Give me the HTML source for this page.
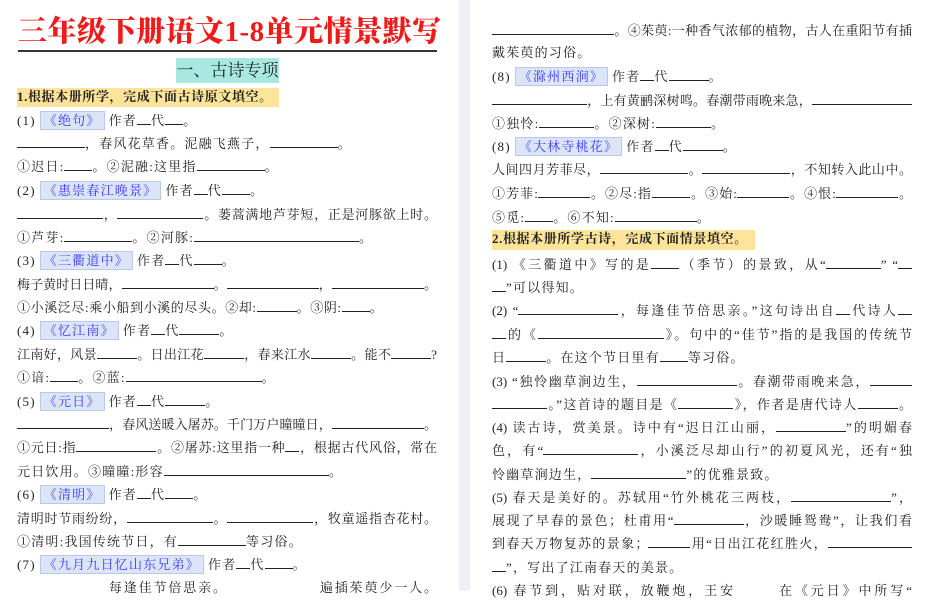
<!DOCTYPE html><html><head><meta charset="utf-8"><style>
body{margin:0;width:933px;height:591px;background:#fff;position:relative;overflow:hidden;font-family:"Liberation Serif","Noto Serif CJK SC","Noto Sans CJK SC",serif;color:#222;}
.l{position:absolute;font-size:13px;letter-spacing:1.2px;white-space:nowrap;line-height:18px;}
.f{width:420px;text-align:justify;text-align-last:justify;letter-spacing:0;}
.b{display:inline-block;border-bottom:1px solid #222;height:13px;vertical-align:baseline;}
.t{background:#dce4f8;border:1px solid #b9c9ee;color:#3a3aff;padding:1px 3px;margin:0 4px;}
</style></head><body>
<div style="position:absolute;left:459px;top:0;width:11px;height:591px;background:#eef0f5"></div>
<div style="position:absolute;left:18px;top:14px;width:419px;font:900 29px 'Liberation Serif','Noto Serif CJK SC',serif;color:#ee1b1b;letter-spacing:0.5px;white-space:nowrap;border-bottom:2px solid #333;line-height:36px">三年级下册语文1-8单元情景默写</div>
<div style="position:absolute;left:176px;top:58px;width:103px;height:25px;background:#a8e8e0;font-size:17px;line-height:25px;text-align:center">一、古诗专项</div>
<div class="l" style="left:17px;top:88px;width:262px;height:19px;background:#fde49a;font-weight:bold;letter-spacing:0.6px">1.根据本册所学，完成下面古诗原文填空。</div>

<div class="l" style="left:17px;top:111px">(1)<span class="t">《绝句》</span>作者<span class="b" style="width:14px"></span>代<span class="b" style="width:18px"></span>。</div>
<div class="l" style="left:17px;top:134px"><span class="b" style="width:68px"></span>，春风花草香。泥融飞燕子，<span class="b" style="width:68px"></span>。</div>
<div class="l" style="left:17px;top:157px">①迟日:<span class="b" style="width:28px"></span>。②泥融:这里指<span class="b" style="width:68px"></span>。</div>
<div class="l" style="left:17px;top:181px">(2)<span class="t">《惠崇春江晚景》</span>作者<span class="b" style="width:14px"></span>代<span class="b" style="width:28px"></span>。</div>
<div class="l f" style="left:17px;top:205px"><span class="b" style="width:86px"></span>，<span class="b" style="width:86px"></span>。蒌蒿满地芦芽短，正是河豚欲上时。</div>
<div class="l" style="left:17px;top:228px">①芦芽:<span class="b" style="width:68px"></span>。②河豚:<span class="b" style="width:165px"></span>。</div>
<div class="l" style="left:17px;top:251px">(3)<span class="t">《三衢道中》</span>作者<span class="b" style="width:14px"></span>代<span class="b" style="width:28px"></span>。</div>
<div class="l f" style="left:17px;top:275px">梅子黄时日日晴，<span class="b" style="width:92px"></span>。<span class="b" style="width:92px"></span>，<span class="b" style="width:92px"></span>。</div>
<div class="l" style="left:17px;top:298px;letter-spacing:0.6px">①小溪泛尽:乘小船到小溪的尽头。②却:<span class="b" style="width:40px"></span>。③阴:<span class="b" style="width:28px"></span>。</div>
<div class="l" style="left:17px;top:321px">(4)<span class="t">《忆江南》</span>作者<span class="b" style="width:14px"></span>代<span class="b" style="width:40px"></span>。</div>
<div class="l f" style="left:17px;top:345px">江南好，风景<span class="b" style="width:40px"></span>。日出江花<span class="b" style="width:40px"></span>，春来江水<span class="b" style="width:40px"></span>。能不<span class="b" style="width:40px"></span>?</div>
<div class="l" style="left:17px;top:368px">①谙:<span class="b" style="width:28px"></span>。②蓝:<span class="b" style="width:136px"></span>。</div>
<div class="l" style="left:17px;top:392px">(5)<span class="t">《元日》</span>作者<span class="b" style="width:14px"></span>代<span class="b" style="width:40px"></span>。</div>
<div class="l f" style="left:17px;top:415px"><span class="b" style="width:92px"></span>，春风送暖入屠苏。千门万户曈曈日，<span class="b" style="width:92px"></span>。</div>
<div class="l f" style="left:17px;top:438px">①元日:指<span class="b" style="width:80px"></span>。②屠苏:这里指一种<span class="b" style="width:14px"></span>，根据古代风俗，常在</div>
<div class="l" style="left:17px;top:462px">元日饮用。③曈曈:形容<span class="b" style="width:165px"></span>。</div>
<div class="l" style="left:17px;top:485px">(6)<span class="t">《清明》</span>作者<span class="b" style="width:14px"></span>代<span class="b" style="width:28px"></span>。</div>
<div class="l f" style="left:17px;top:509px">清明时节雨纷纷，<span class="b" style="width:86px"></span>。<span class="b" style="width:86px"></span>，牧童遥指杏花村。</div>
<div class="l" style="left:17px;top:532px">①清明:我国传统节日，有<span class="b" style="width:68px"></span>等习俗。</div>
<div class="l" style="left:17px;top:555px">(7)<span class="t">《九月九日忆山东兄弟》</span>作者<span class="b" style="width:14px"></span>代<span class="b" style="width:28px"></span>。</div>
<div class="l f" style="left:17px;top:579px"><span class="b" style="width:90px;border:0"></span>每逢佳节倍思亲。<span class="b" style="width:90px;border:0"></span>遍插茱萸少一人。</div>

<div class="l f" style="left:492px;top:21px"><span class="b" style="width:122px"></span>。④茱萸:一种香气浓郁的植物，古人在重阳节有插</div>
<div class="l" style="left:492px;top:44px">戴茱萸的习俗。</div>
<div class="l" style="left:492px;top:67px">(8)<span class="t">《滁州西涧》</span>作者<span class="b" style="width:14px"></span>代<span class="b" style="width:40px"></span>。</div>
<div class="l f" style="left:492px;top:91px"><span class="b" style="width:95px"></span>，上有黄鹂深树鸣。春潮带雨晚来急，<span class="b" style="width:100px"></span></div>
<div class="l" style="left:492px;top:114px">①独怜:<span class="b" style="width:55px"></span>。②深树:<span class="b" style="width:55px"></span>。</div>
<div class="l" style="left:492px;top:137px">(8)<span class="t">《大林寺桃花》</span>作者<span class="b" style="width:14px"></span>代<span class="b" style="width:40px"></span>。</div>
<div class="l f" style="left:492px;top:160px">人间四月芳菲尽，<span class="b" style="width:88px"></span>。<span class="b" style="width:88px"></span>，不知转入此山中。</div>
<div class="l f" style="left:492px;top:184px">①芳菲:<span class="b" style="width:52px"></span>。②尽:指<span class="b" style="width:38px"></span>。③始:<span class="b" style="width:52px"></span>。④恨:<span class="b" style="width:62px"></span>。</div>
<div class="l" style="left:492px;top:208px">⑤觅:<span class="b" style="width:28px"></span>。⑥不知:<span class="b" style="width:82px"></span>。</div>
<div class="l" style="left:492px;top:230px;width:263px;height:20px;background:#fde49a;font-weight:bold;letter-spacing:0.6px">2.根据本册所学古诗，完成下面情景填空。</div>
<div class="l f" style="left:492px;top:255px">(1) 《三衢道中》写的是<span class="b" style="width:28px"></span>（季节）的景致，从“<span class="b" style="width:55px"></span>” “<span class="b" style="width:14px"></span></div>
<div class="l" style="left:492px;top:278px"><span class="b" style="width:14px"></span>”可以得知。</div>
<div class="l f" style="left:492px;top:301px">(2) “<span class="b" style="width:100px"></span>，每逢佳节倍思亲。”这句诗出自<span class="b" style="width:14px"></span>代诗人<span class="b" style="width:14px"></span></div>
<div class="l f" style="left:492px;top:325px"><span class="b" style="width:14px"></span>的《<span class="b" style="width:126px"></span>》。句中的“佳节”指的是我国的传统节</div>
<div class="l" style="left:492px;top:348px">日<span class="b" style="width:40px"></span>。在这个节日里有<span class="b" style="width:28px"></span>等习俗。</div>
<div class="l f" style="left:492px;top:372px">(3) “独怜幽草涧边生，<span class="b" style="width:100px"></span>。春潮带雨晚来急，<span class="b" style="width:42px"></span></div>
<div class="l f" style="left:492px;top:395px"><span class="b" style="width:55px"></span>。”这首诗的题目是《<span class="b" style="width:55px"></span>》，作者是唐代诗人<span class="b" style="width:40px"></span>。</div>
<div class="l f" style="left:492px;top:418px">(4) 读古诗，赏美景。诗中有“迟日江山丽，<span class="b" style="width:70px"></span>”的明媚春</div>
<div class="l f" style="left:492px;top:441px">色，有“<span class="b" style="width:95px"></span>，小溪泛尽却山行”的初夏风光，还有“独</div>
<div class="l" style="left:492px;top:465px">怜幽草涧边生，<span class="b" style="width:95px"></span>”的优雅景致。</div>
<div class="l f" style="left:492px;top:488px">(5) 春天是美好的。苏轼用“竹外桃花三两枝，<span class="b" style="width:100px"></span>”，</div>
<div class="l f" style="left:492px;top:511px">展现了早春的景色；杜甫用“<span class="b" style="width:70px"></span>，沙暖睡鸳鸯”，让我们看</div>
<div class="l f" style="left:492px;top:534px">到春天万物复苏的景象；<span class="b" style="width:42px"></span>用“日出江花红胜火，<span class="b" style="width:84px"></span></div>
<div class="l" style="left:492px;top:558px"><span class="b" style="width:14px"></span>”，写出了江南春天的美景。</div>
<div class="l f" style="left:492px;top:582px">(6) 春节到，贴对联，放鞭炮，王安<span class="b" style="width:40px;border:0"></span>在《元日》中所写“</div>
</body></html>
